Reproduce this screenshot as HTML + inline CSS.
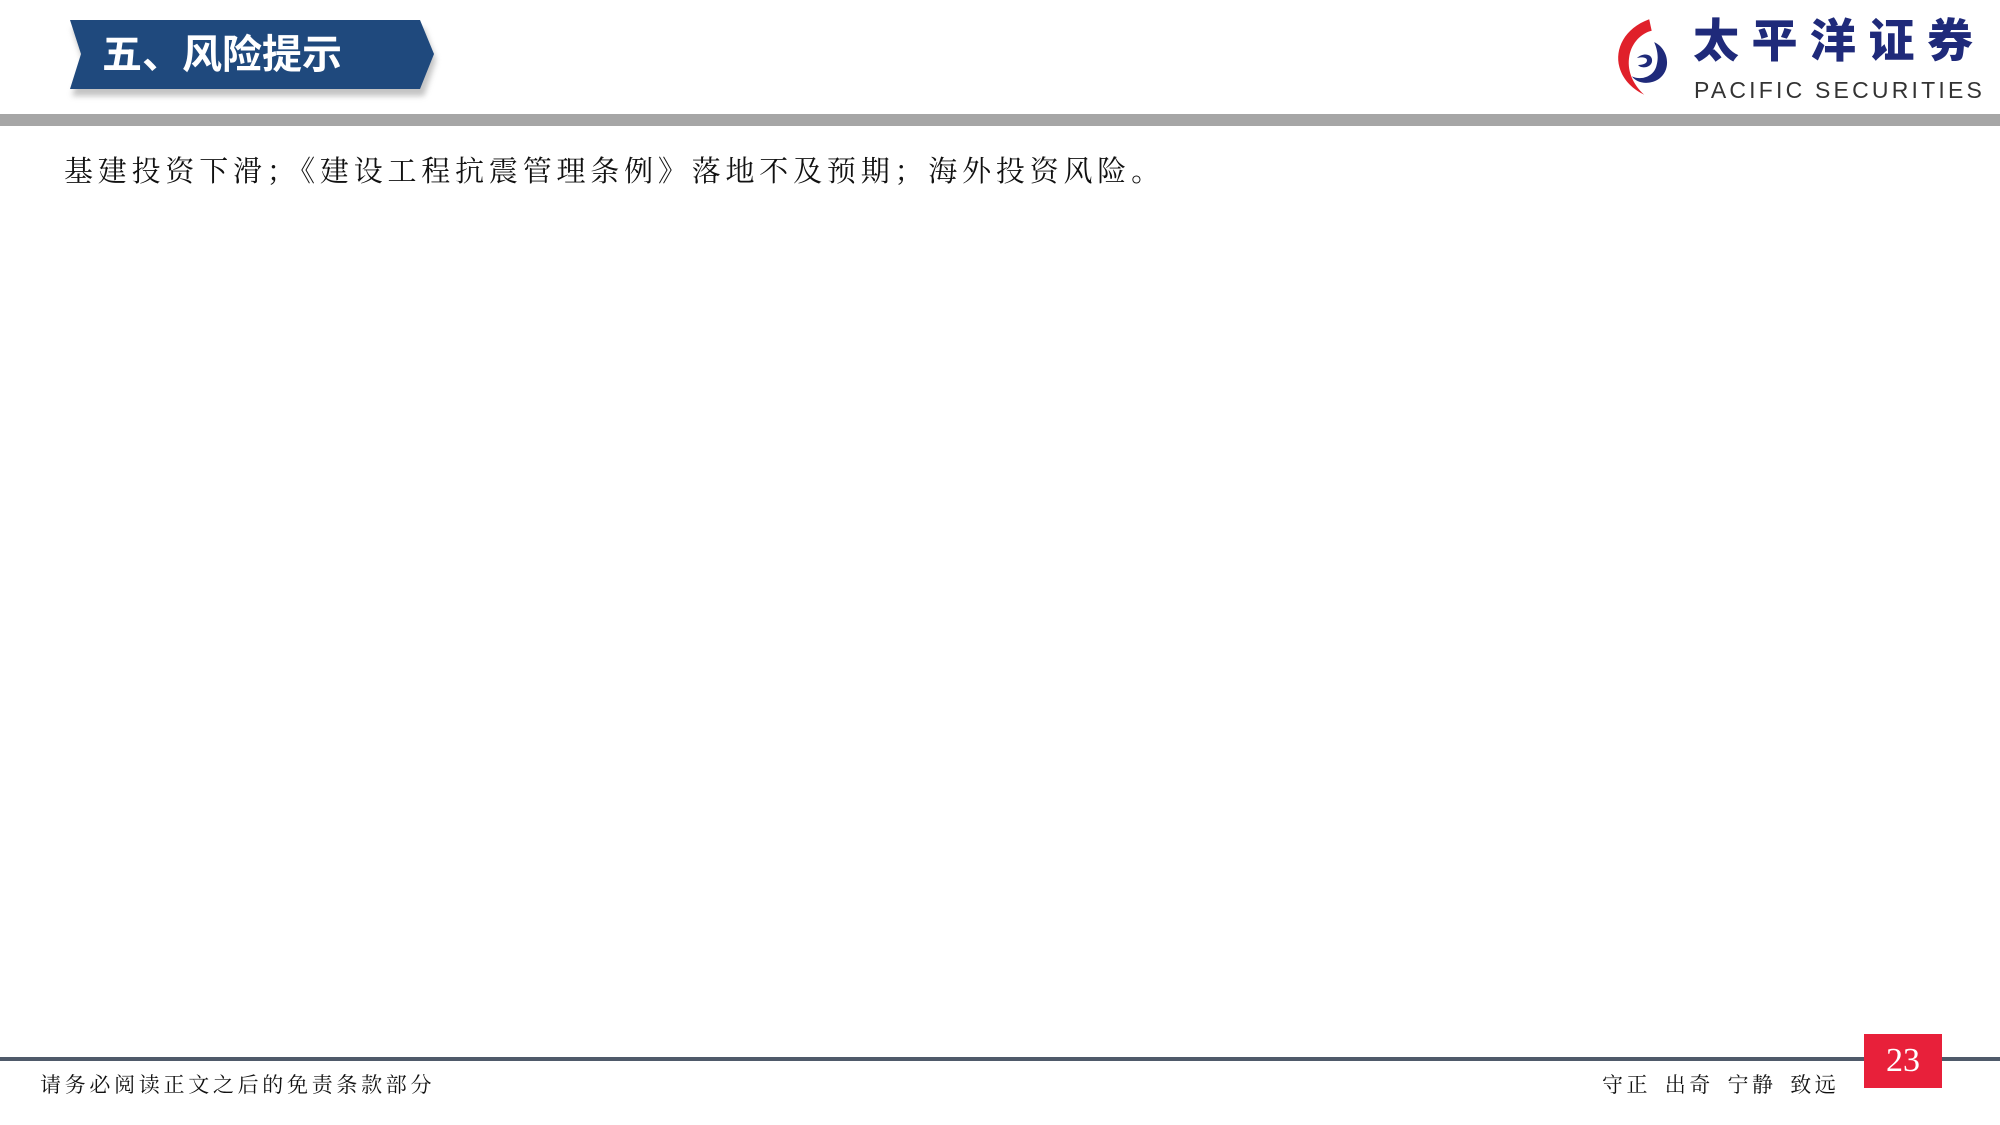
<!DOCTYPE html>
<html><head><meta charset="utf-8"><style>
body{margin:0;width:2000px;height:1125px;background:#fff;position:relative;overflow:hidden;font-family:"Liberation Serif","Noto Serif CJK SC",serif}
.a{position:absolute}
</style></head><body>
<svg class="a" style="left:0;top:0" width="470" height="110">
<defs><filter id="s" x="-10%" y="-10%" width="130%" height="150%"><feGaussianBlur stdDeviation="3"/></filter></defs>
<polygon points="72,28 424,28 436,60 424,96 72,96 83,61" fill="#888" opacity=".5" filter="url(#s)"/>
<polygon points="70,20 420,20 434,54 420,89 70,89 81,54" fill="#1f497d"/>
</svg>
<div class="a" style="left:102px;top:30px;font:bold 40px 'Liberation Sans','Noto Sans CJK SC',sans-serif;color:#fff;line-height:50px">五、风险提示</div>
<svg class="a" style="left:1612px;top:17px" width="62" height="80" viewBox="0 0 50 70" preserveAspectRatio="none">
<path d="M30 2 C10 10 2 28 6 44 C9 56 18 64 26 68 C16 58 12 46 14 34 C16 22 24 14 32 12 Z" fill="#e0202a"/>
<path d="M34 22 C46 28 48 46 38 54 C30 60 20 58 16 52 C24 56 34 52 36 42 C38 34 36 27 34 22Z" fill="#1f2a7a"/>
<path d="M20 36 C26 30 34 33 32 40 C30 45 23 45 21 42 C26 42 29 40 28 37 C27 35 23 35 20 36Z" fill="#1f2a7a"/>
</svg>
<div class="a" style="left:1693px;top:12px;font:900 46px 'Noto Sans CJK SC',sans-serif;color:#1f2a7a;letter-spacing:12.5px;line-height:52px">太平洋证券</div>
<div class="a" style="left:1694px;top:77px;font:23px 'Liberation Sans',sans-serif;color:#333;letter-spacing:3.2px;line-height:26px">PACIFIC SECURITIES</div>
<div class="a" style="left:0;top:114px;width:2000px;height:12px;background:#a6a6a6"></div>
<div class="a" style="left:64px;top:152px;font-size:29px;color:#111;line-height:40px;letter-spacing:4.8px">基建投资下滑；《建设工程抗震管理条例》落地不及预期；海外投资风险。</div>
<div class="a" style="left:0;top:1057px;width:2000px;height:4px;background:#4f5a6a"></div>
<div class="a" style="left:1864px;top:1034px;width:78px;height:54px;background:#e8203a;color:#fff;font-size:34px;text-align:center;line-height:54px">23</div>
<div class="a" style="left:40px;top:1070px;font-size:21px;color:#111;line-height:30px;letter-spacing:3.7px">请务必阅读正文之后的免责条款部分</div>
<div class="a" style="left:1602px;top:1070px;font-size:21px;color:#111;line-height:30px;letter-spacing:3.5px;word-spacing:5px">守正 出奇 宁静 致远</div>
</body></html>
